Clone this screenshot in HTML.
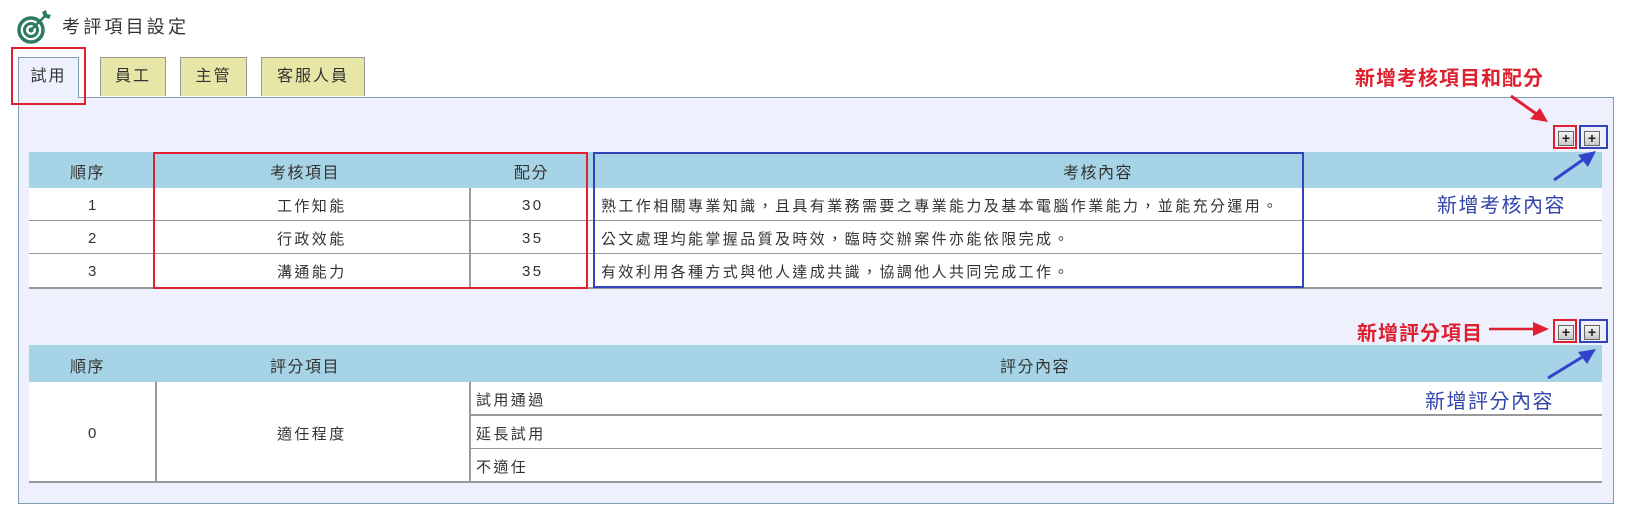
<!DOCTYPE html>
<html><head><meta charset="utf-8"><style>
*{margin:0;padding:0;box-sizing:border-box}
body{width:1637px;height:524px;background:#fff;position:relative;overflow:hidden;font-family:"Liberation Sans","Noto Sans CJK TC",sans-serif;color:#333}
.a{position:absolute}
.t{font-size:15px;letter-spacing:2.4px;white-space:nowrap}
.h{font-size:16px;letter-spacing:1.5px;white-space:nowrap}
.tab{position:absolute;top:57px;height:39px;border:1px solid #999;border-bottom:none;background:#e6e6a6;font-size:16px;letter-spacing:2px;text-align:center;line-height:38px}
.hdr{position:absolute;background:#a6d4e6}
.row{position:absolute;background:#fff}
.hl{position:absolute;height:1px;background:#999}
.vl{position:absolute;width:2px;background:#999}
.btn{position:absolute;width:16px;height:15px;border:1px solid #666;background:linear-gradient(#f4f4f4,#c8c8c8);font-size:14px;line-height:12px;text-align:center;color:#222;font-weight:bold}
.rb{position:absolute;border:2px solid #e02030}
.bb{position:absolute;border:2px solid #3344bb}
.ann{position:absolute;font-size:20px;letter-spacing:1px;white-space:nowrap}
</style></head><body>
<svg class="a" style="left:14px;top:8px" width="38" height="36" viewBox="0 0 38 36">
<circle cx="17" cy="22" r="12" fill="none" stroke="#2d7a62" stroke-width="3.5"/>
<circle cx="17" cy="22" r="6.5" fill="none" stroke="#2d7a62" stroke-width="3"/>
<circle cx="17" cy="22" r="2.5" fill="#2d7a62"/>
<line x1="17" y1="22" x2="31" y2="8" stroke="#2d7a62" stroke-width="2.5"/>
<path d="M28 4 L30 9 L35 11 L37 7 L33 6 L32 2 Z" fill="#2d7a62"/>
</svg>
<div class="a" style="left:62px;top:13px;font-size:18px;letter-spacing:3.2px">考評項目設定</div>

<div class="a" style="left:18px;top:97px;width:1596px;height:407px;background:#eef0fd;border:1px solid #7f9bb4"></div>
<div class="tab" style="left:18px;width:61px;height:41px;background:#eef0fd;border-color:#7f9bb4;z-index:2">試用</div>
<div class="tab" style="left:100px;width:66px">員工</div>
<div class="tab" style="left:180px;width:67px">主管</div>
<div class="tab" style="left:261px;width:104px">客服人員</div>
<div class="rb" style="left:11px;top:47px;width:75px;height:58px;z-index:3"></div>

<div class="hdr" style="left:29px;top:152px;width:1573px;height:36px"></div>
<div class="row" style="left:29px;top:188px;width:1573px;height:100px"></div>
<div class="h a" style="left:70px;top:159px">順序</div>
<div class="h a" style="left:270px;top:159px">考核項目</div>
<div class="h a" style="left:514px;top:159px">配分</div>
<div class="h a" style="left:1063px;top:159px">考核內容</div>
<div class="hl" style="left:29px;top:220px;width:1573px"></div>
<div class="hl" style="left:29px;top:253px;width:1573px"></div>
<div class="hl" style="left:29px;top:287px;width:1573px;height:2px"></div>
<div class="vl" style="left:469px;top:188px;height:100px"></div>
<div class="t a" style="left:88px;top:197px">1</div>
<div class="t a" style="left:88px;top:230px">2</div>
<div class="t a" style="left:88px;top:263px">3</div>
<div class="t a" style="left:277px;top:195px">工作知能</div>
<div class="t a" style="left:277px;top:228px">行政效能</div>
<div class="t a" style="left:277px;top:261px">溝通能力</div>
<div class="t a" style="left:522px;top:197px">30</div>
<div class="t a" style="left:522px;top:230px">35</div>
<div class="t a" style="left:522px;top:263px">35</div>
<div class="t a" style="left:601px;top:195px">熟工作相關專業知識，且具有業務需要之專業能力及基本電腦作業能力，並能充分運用。</div>
<div class="t a" style="left:601px;top:228px">公文處理均能掌握品質及時效，臨時交辦案件亦能依限完成。</div>
<div class="t a" style="left:601px;top:261px">有效利用各種方式與他人達成共識，協調他人共同完成工作。</div>
<div class="rb" style="left:153px;top:152px;width:435px;height:137px"></div>
<div class="bb" style="left:593px;top:152px;width:711px;height:136px"></div>

<div class="hdr" style="left:29px;top:345px;width:1573px;height:37px"></div>
<div class="row" style="left:29px;top:382px;width:1573px;height:100px"></div>
<div class="h a" style="left:70px;top:353px">順序</div>
<div class="h a" style="left:270px;top:353px">評分項目</div>
<div class="h a" style="left:1000px;top:353px">評分內容</div>
<div class="vl" style="left:155px;top:382px;height:100px"></div>
<div class="vl" style="left:469px;top:382px;height:100px"></div>
<div class="hl" style="left:470px;top:414px;width:1132px;height:2px"></div>
<div class="hl" style="left:470px;top:448px;width:1132px"></div>
<div class="hl" style="left:29px;top:481px;width:1573px;height:2px"></div>
<div class="t a" style="left:88px;top:425px">0</div>
<div class="t a" style="left:277px;top:423px">適任程度</div>
<div class="t a" style="left:476px;top:389px">試用通過</div>
<div class="t a" style="left:476px;top:423px">延長試用</div>
<div class="t a" style="left:476px;top:456px">不適任</div>

<div class="btn" style="left:1558px;top:131px">+</div>
<div class="btn" style="left:1584px;top:131px">+</div>
<div class="rb" style="left:1553px;top:125px;width:24px;height:24px"></div>
<div class="bb" style="left:1579px;top:125px;width:29px;height:24px"></div>
<div class="btn" style="left:1558px;top:325px">+</div>
<div class="btn" style="left:1584px;top:325px">+</div>
<div class="rb" style="left:1553px;top:319px;width:24px;height:24px"></div>
<div class="bb" style="left:1579px;top:319px;width:29px;height:24px"></div>

<div class="ann" style="left:1355px;top:62px;color:#dd2030;font-weight:bold">新增考核項目和配分</div>
<div class="ann" style="left:1437px;top:189px;color:#3344aa;letter-spacing:1.5px">新增考核內容</div>
<div class="ann" style="left:1357px;top:317px;color:#dd2030;font-weight:bold">新增評分項目</div>
<div class="ann" style="left:1425px;top:385px;color:#3344aa;letter-spacing:1.5px">新增評分內容</div>
<svg class="a" style="left:0;top:0" width="1637" height="524">
<line x1="1511" y1="96" x2="1538" y2="115" stroke="#e02030" stroke-width="3"/>
<path d="M1548 122 L1530 119 L1540 108 Z" fill="#e02030"/>
<line x1="1489" y1="329" x2="1535" y2="329" stroke="#e02030" stroke-width="2.5"/>
<path d="M1549 329 L1533 322 L1533 336 Z" fill="#e02030"/>
<line x1="1554" y1="180" x2="1584" y2="159" stroke="#3344cc" stroke-width="3"/>
<path d="M1596 151 L1588 167 L1578 155 Z" fill="#3344cc"/>
<line x1="1548" y1="378" x2="1584" y2="356" stroke="#3344cc" stroke-width="3"/>
<path d="M1596 349 L1587 364 L1578 352 Z" fill="#3344cc"/>
</svg>
</body></html>
